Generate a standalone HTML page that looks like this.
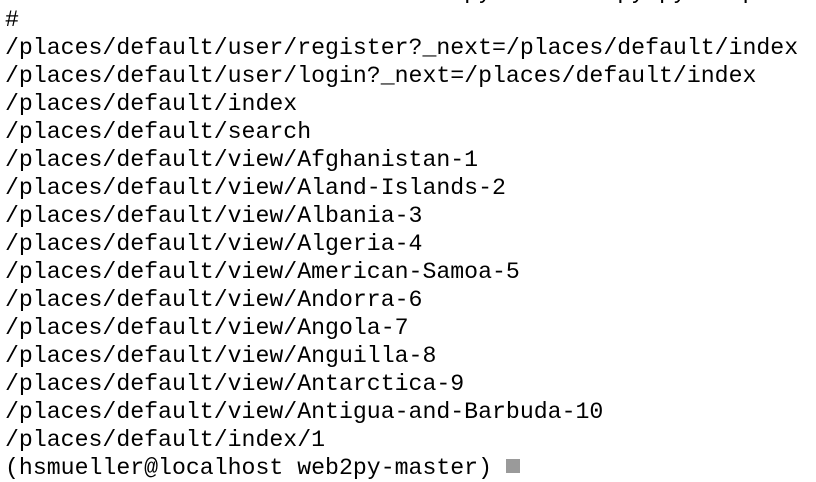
<!DOCTYPE html>
<html><head><meta charset="utf-8"><style>
html,body{margin:0;padding:0;background:#fff;width:816px;height:458px;overflow:hidden}
pre{position:absolute;left:5px;top:-22px;margin:0;font-family:"Liberation Mono",monospace;font-size:23.2px;line-height:28px;color:#000;white-space:pre}
.cur{display:inline-block;width:14px;height:14px;background:#9a9a9a;vertical-align:top;margin-top:5px}
</style></head><body><pre>                                 python web2py.py -S places
#
/places/default/user/register?_next=/places/default/index
/places/default/user/login?_next=/places/default/index
/places/default/index
/places/default/search
/places/default/view/Afghanistan-1
/places/default/view/Aland-Islands-2
/places/default/view/Albania-3
/places/default/view/Algeria-4
/places/default/view/American-Samoa-5
/places/default/view/Andorra-6
/places/default/view/Angola-7
/places/default/view/Anguilla-8
/places/default/view/Antarctica-9
/places/default/view/Antigua-and-Barbuda-10
/places/default/index/1
(hsmueller@localhost web2py-master) <span class="cur"></span></pre></body></html>
